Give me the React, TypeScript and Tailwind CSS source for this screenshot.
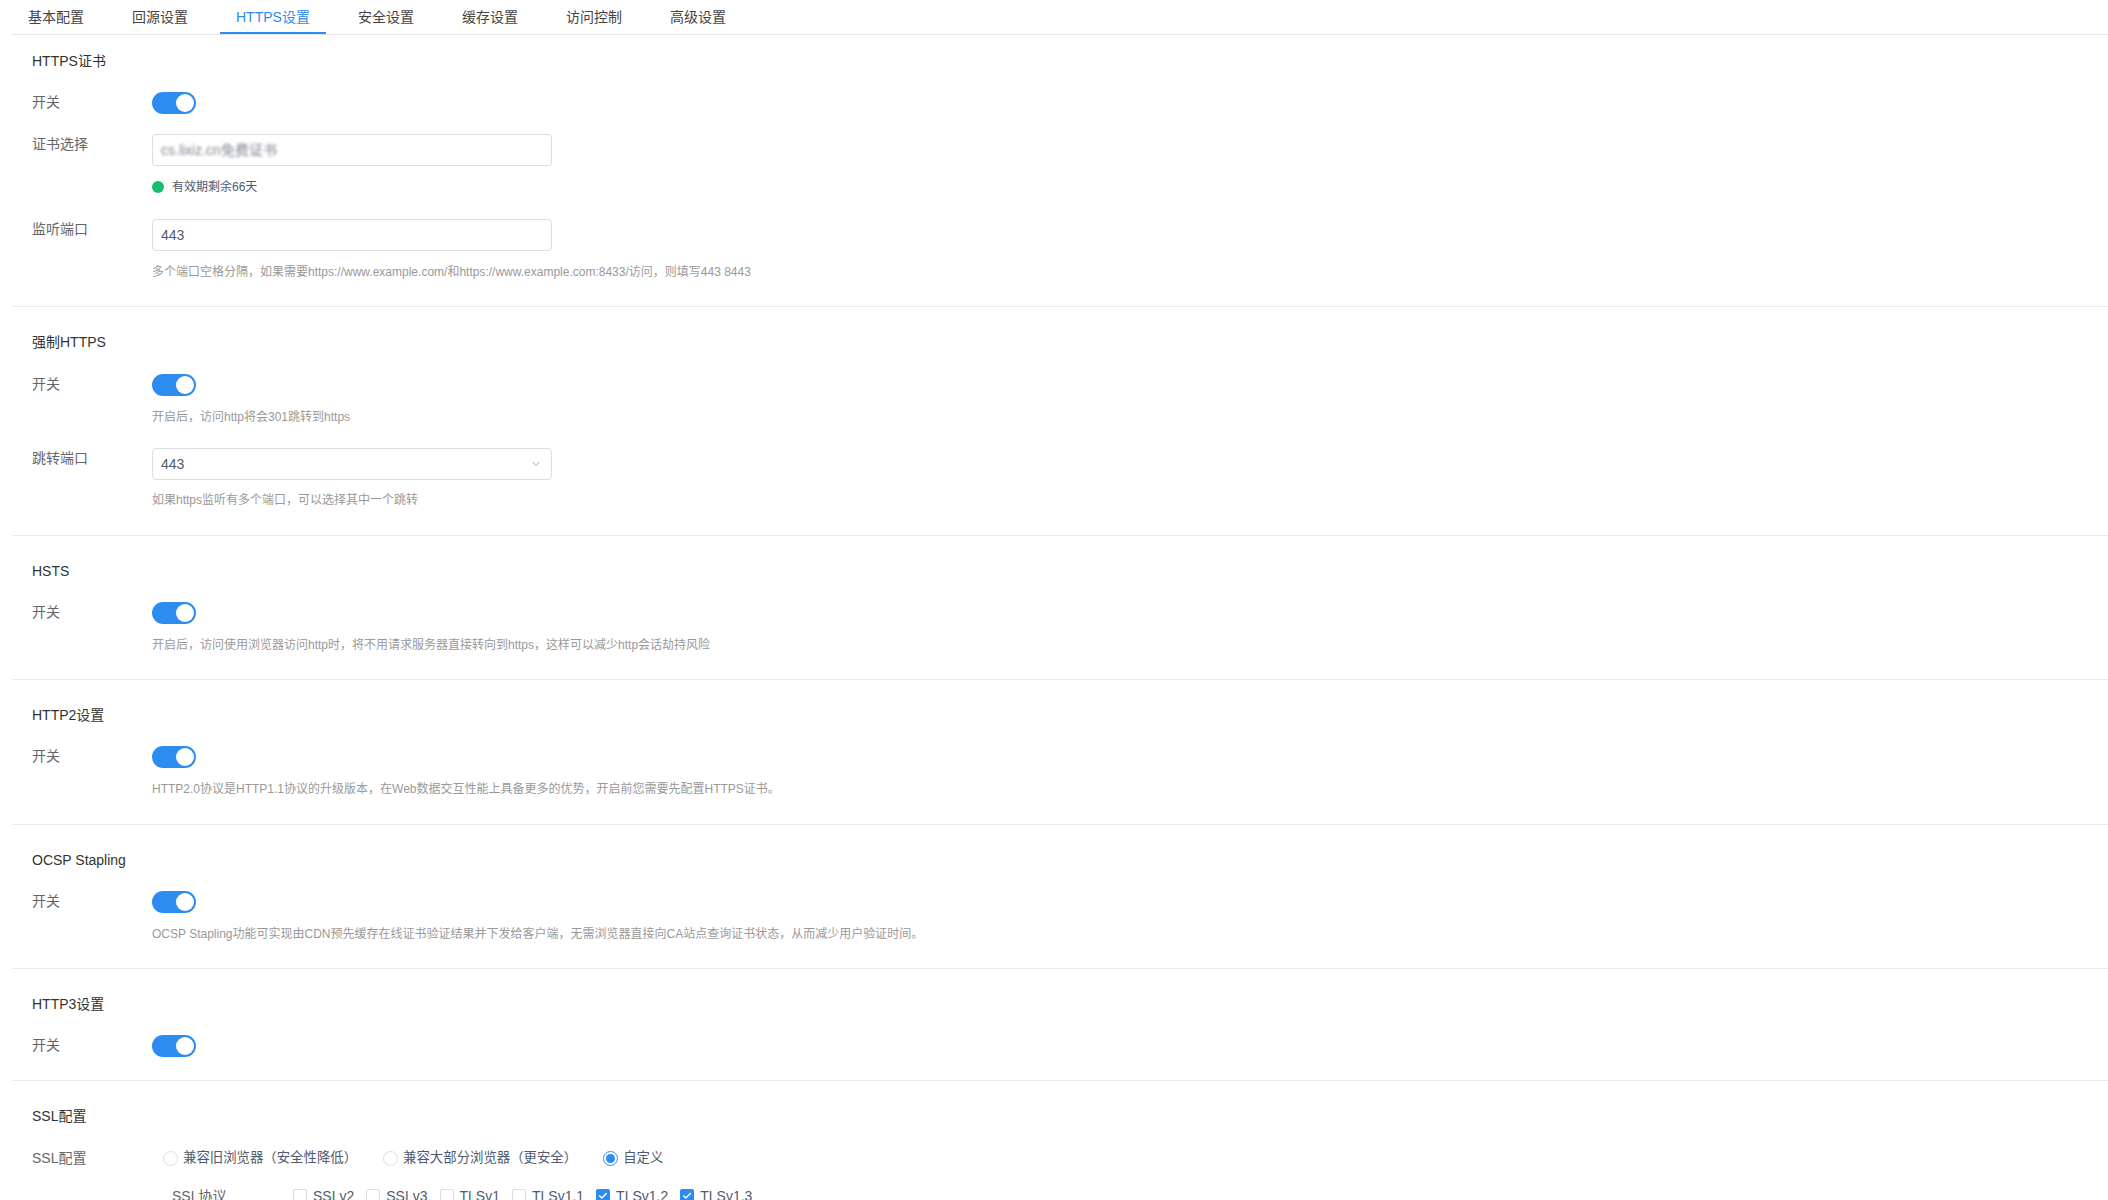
import { ChevronDown, Check } from "lucide-react";

const tabs = ["基本配置", "回源设置", "HTTPS设置", "安全设置", "缓存设置", "访问控制", "高级设置"];

function Toggle() {
  return (
    <div className="relative h-[22px] w-[44px] rounded-full bg-[#2d8cf0]">
      <div className="absolute right-[2px] top-[2px] h-[18px] w-[18px] rounded-full bg-white" />
    </div>
  );
}

function Row({ label, children, className = "" }: { label: string; children: React.ReactNode; className?: string }) {
  return (
    <div className={"flex " + className}>
      <div className="w-[120px] shrink-0 text-sm leading-5 text-[#666]">{label}</div>
      <div className="flex-1">{children}</div>
    </div>
  );
}

function Help({ children, className = "mt-3" }: { children: React.ReactNode; className?: string }) {
  return <div className={"text-xs leading-[18px] text-[#999] " + className}>{children}</div>;
}

function Title({ children }: { children: React.ReactNode }) {
  return <div className="text-sm leading-5 text-[#333]">{children}</div>;
}

function Radio({ label, checked = false }: { label: string; checked?: boolean }) {
  return (
    <label className="flex items-center gap-[5px]">
      {checked ? (
        <span className="flex h-[15px] w-[15px] items-center justify-center rounded-full border border-[#2d8cf0] bg-white">
          <span className="h-[9px] w-[9px] rounded-full bg-[#2d8cf0]" />
        </span>
      ) : (
        <span className="h-[15px] w-[15px] rounded-full border border-[#dcdee2] bg-white" />
      )}
      <span className="text-[13.4px] leading-5 text-[#515a6e]">{label}</span>
    </label>
  );
}

function CheckItem({ label, checked = false }: { label: string; checked?: boolean }) {
  return (
    <label className="flex items-center gap-[6px]">
      {checked ? (
        <span className="flex h-[14px] w-[14px] items-center justify-center rounded-[2px] bg-[#2d8cf0]">
          <Check size={10} strokeWidth={3.5} className="text-white" />
        </span>
      ) : (
        <span className="h-[14px] w-[14px] rounded-[2px] border border-[#dcdee2] bg-white" />
      )}
      <span className="text-sm leading-5 text-[#515a6e]">{label}</span>
    </label>
  );
}

export default function App() {
  return (
    <div className="h-[1200px] overflow-hidden bg-white pl-3 font-['Liberation_Sans','Noto_Sans_CJK_SC',sans-serif]">
      {/* tabs */}
      <div className="flex gap-4 border-b border-[#e3e5e8]">
        {tabs.map((t) => (
          <div
            key={t}
            className={
              "relative flex h-[34px] items-center px-4 text-sm " +
              (t === "HTTPS设置" ? "text-[#2d8cf0]" : "text-[#444]")
            }
          >
            {t}
            {t === "HTTPS设置" && <div className="absolute bottom-0 left-0 h-[2px] w-full bg-[#2d8cf0]" />}
          </div>
        ))}
      </div>

      {/* HTTPS证书 */}
      <div className="border-b border-[#e8eaec] px-5 pb-[25px] pt-4">
        <Title>HTTPS证书</Title>
        <Row label="开关" className="mt-[21px]">
          <Toggle />
        </Row>
        <Row label="证书选择" className="mt-5">
          <div className="flex h-8 w-[400px] items-center rounded border border-[#dcdee2] px-2">
            <span className="select-none text-sm text-[#7d828c] blur-[1.4px]">cs.lixiz.cn免费证书</span>
          </div>
          <div className="mt-[14px] flex h-[14px] items-center gap-2">
            <span className="h-3 w-3 rounded-full bg-[#19be6b]" />
            <span className="text-xs text-[#515a6e]">有效期剩余66天</span>
          </div>
        </Row>
        <Row label="监听端口" className="mt-[25px]">
          <div className="flex h-8 w-[400px] items-center rounded border border-[#dcdee2] px-2 text-sm text-[#515a6e]">
            443
          </div>
          <Help>多个端口空格分隔，如果需要https://www.example.com/和https://www.example.com:8433/访问，则填写443 8443</Help>
        </Row>
      </div>

      {/* 强制HTTPS */}
      <div className="border-b border-[#e8eaec] px-5 pb-[26px] pt-[25px]">
        <Title>强制HTTPS</Title>
        <Row label="开关" className="mt-[22px]">
          <Toggle />
          <Help>开启后，访问http将会301跳转到https</Help>
        </Row>
        <Row label="跳转端口" className="mt-[22px]">
          <div className="relative flex h-8 w-[400px] items-center rounded border border-[#dcdee2] px-2 text-sm text-[#515a6e]">
            443
            <ChevronDown size={12} strokeWidth={1.5} className="absolute right-[9px] top-[9px] text-[#808695]" />
          </div>
          <Help className="mt-[11px]">如果https监听有多个端口，可以选择其中一个跳转</Help>
        </Row>
      </div>

      {/* HSTS */}
      <div className="border-b border-[#e8eaec] px-5 pb-[25px] pt-[25px]">
        <Title>HSTS</Title>
        <Row label="开关" className="mt-[21px]">
          <Toggle />
          <Help>开启后，访问使用浏览器访问http时，将不用请求服务器直接转向到https，这样可以减少http会话劫持风险</Help>
        </Row>
      </div>

      {/* HTTP2 */}
      <div className="border-b border-[#e8eaec] px-5 pb-[26px] pt-[25px]">
        <Title>HTTP2设置</Title>
        <Row label="开关" className="mt-[21px]">
          <Toggle />
          <Help>HTTP2.0协议是HTTP1.1协议的升级版本，在Web数据交互性能上具备更多的优势，开启前您需要先配置HTTPS证书。</Help>
        </Row>
      </div>

      {/* OCSP */}
      <div className="border-b border-[#e8eaec] px-5 pb-[25px] pt-[25px]">
        <Title>OCSP Stapling</Title>
        <Row label="开关" className="mt-[21px]">
          <Toggle />
          <Help>OCSP Stapling功能可实现由CDN预先缓存在线证书验证结果并下发给客户端，无需浏览器直接向CA站点查询证书状态，从而减少用户验证时间。</Help>
        </Row>
      </div>

      {/* HTTP3 */}
      <div className="border-b border-[#e8eaec] px-5 pb-[23px] pt-[25px]">
        <Title>HTTP3设置</Title>
        <Row label="开关" className="mt-[21px]">
          <Toggle />
        </Row>
      </div>

      {/* SSL */}
      <div className="px-5 pb-6 pt-[25px]">
        <Title>SSL配置</Title>
        <Row label="SSL配置" className="mt-[22px]">
          <div className="ml-[11px] flex items-center gap-[26px]">
            <Radio label="兼容旧浏览器（安全性降低）" />
            <Radio label="兼容大部分浏览器（更安全）" />
            <Radio label="自定义" checked />
          </div>
          <div className="mt-[18px] flex">
            <div className="ml-5 w-[121px] text-sm leading-5 text-[#666]">SSL协议</div>
            <div className="flex items-center gap-3">
              <CheckItem label="SSLv2" />
              <CheckItem label="SSLv3" />
              <CheckItem label="TLSv1" />
              <CheckItem label="TLSv1.1" />
              <CheckItem label="TLSv1.2" checked />
              <CheckItem label="TLSv1.3" checked />
            </div>
          </div>
        </Row>
      </div>
    </div>
  );
}
